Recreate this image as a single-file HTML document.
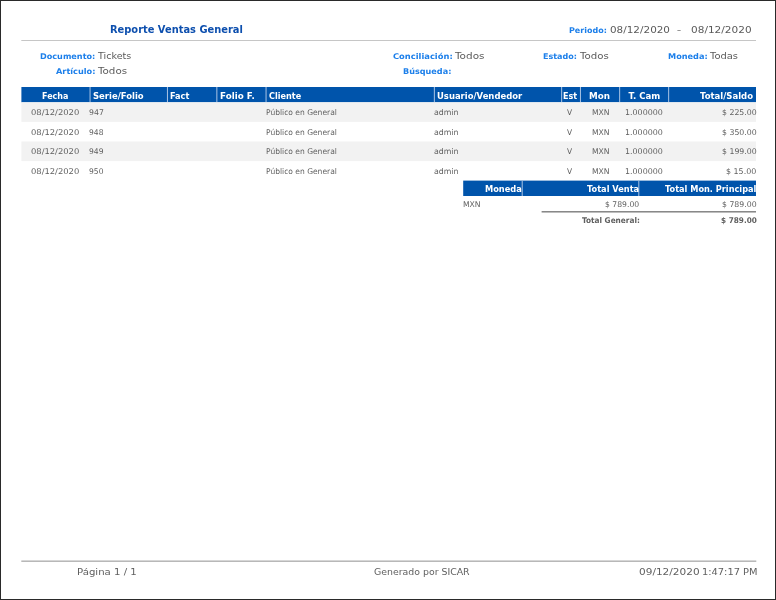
<!DOCTYPE html>
<html lang="es"><head><meta charset="utf-8"><title>Reporte Ventas General</title>
<style>
html,body{margin:0;padding:0;background:#fff;}
#page{position:relative;width:776px;height:600px;overflow:hidden;background:#fff;will-change:transform}
#frame{position:absolute;left:0;top:0;width:774px;height:598px;border:1px solid #2a2a2a;box-sizing:content-box;pointer-events:none}
#bg{position:absolute;left:0;top:0;display:block}
.t{position:absolute;white-space:pre;line-height:16px;display:block;transform-origin:0 0}
.rd{font-family:'DejaVu Sans', 'Liberation Sans', sans-serif;font-weight:normal}
.rl{font-family:'Liberation Sans', sans-serif;font-weight:normal}
.bd{font-family:'DejaVu Sans', 'Liberation Sans', sans-serif;font-weight:bold}
.bl{font-family:'Liberation Sans', sans-serif;font-weight:bold}
</style></head>
<body><div id="page">
<svg id="bg" width="776" height="600" viewBox="0 0 776 600">
<rect x="21.30" y="40.00" width="734.70" height="1.00" fill="#c6c6c6"/>
<rect x="21.30" y="560.60" width="735.00" height="1.10" fill="#9a9a9a"/>
<rect x="21.40" y="87.00" width="734.60" height="15.30" fill="#0054ab"/>
<rect x="89.55" y="87.00" width="1.00" height="15.30" fill="#a9c4e4"/>
<rect x="166.95" y="87.00" width="1.00" height="15.30" fill="#a9c4e4"/>
<rect x="216.35" y="87.00" width="1.00" height="15.30" fill="#a9c4e4"/>
<rect x="265.55" y="87.00" width="1.00" height="15.30" fill="#a9c4e4"/>
<rect x="433.85" y="87.00" width="1.00" height="15.30" fill="#a9c4e4"/>
<rect x="561.15" y="87.00" width="1.00" height="15.30" fill="#a9c4e4"/>
<rect x="579.95" y="87.00" width="1.00" height="15.30" fill="#a9c4e4"/>
<rect x="619.15" y="87.00" width="1.00" height="15.30" fill="#a9c4e4"/>
<rect x="668.15" y="87.00" width="1.00" height="15.30" fill="#a9c4e4"/>
<rect x="21.40" y="102.30" width="734.60" height="19.60" fill="#f2f2f2"/>
<rect x="21.40" y="141.50" width="734.60" height="19.60" fill="#f2f2f2"/>
<rect x="463.20" y="180.60" width="292.80" height="15.40" fill="#0054ab"/>
<rect x="521.70" y="180.60" width="1.00" height="15.40" fill="#a9c4e4"/>
<rect x="638.30" y="180.60" width="1.00" height="15.40" fill="#a9c4e4"/>
<rect x="541.60" y="211.10" width="214.40" height="1.40" fill="#7c7c7c"/>
</svg>
<span class="t bd" style="left:110.20px;top:22.00px;font-size:10.8px;color:#0d4fae;transform:scaleX(0.9143);">Reporte Ventas General</span>
<span class="t bd" style="left:568.82px;top:23.00px;font-size:7.9px;color:#1c7fea;transform:scaleX(1.0143);">Periodo:</span>
<span class="t rd" style="left:610.20px;top:22.00px;font-size:9.5px;color:#5a5a5a;transform:scaleX(1.0957);">08/12/2020</span>
<span class="t rd" style="left:677.26px;top:22.00px;font-size:9.5px;color:#5a5a5a;transform:scaleX(0.8523);">–</span>
<span class="t rd" style="left:690.58px;top:22.00px;font-size:9.5px;color:#5a5a5a;transform:scaleX(1.1067);">08/12/2020</span>
<span class="t bd" style="left:39.63px;top:49.00px;font-size:7.9px;color:#1c7fea;transform:scaleX(1.0284);">Documento:</span>
<span class="t rd" style="left:97.50px;top:48.00px;font-size:9.0px;color:#5a5a5a;transform:scaleX(1.0621);">Tickets</span>
<span class="t bd" style="left:55.57px;top:64.00px;font-size:7.9px;color:#1c7fea;transform:scaleX(1.0381);">Artículo:</span>
<span class="t rd" style="left:97.71px;top:63.00px;font-size:9.0px;color:#5a5a5a;transform:scaleX(1.1468);">Todos</span>
<span class="t bd" style="left:392.82px;top:49.00px;font-size:7.9px;color:#1c7fea;transform:scaleX(1.0564);">Conciliación:</span>
<span class="t rd" style="left:454.55px;top:48.00px;font-size:9.0px;color:#5a5a5a;transform:scaleX(1.1610);">Todos</span>
<span class="t bd" style="left:403.46px;top:64.00px;font-size:7.9px;color:#1c7fea;transform:scaleX(1.0281);">Búsqueda:</span>
<span class="t bd" style="left:542.91px;top:49.00px;font-size:7.9px;color:#1c7fea;transform:scaleX(1.0185);">Estado:</span>
<span class="t rd" style="left:579.88px;top:48.00px;font-size:9.0px;color:#5a5a5a;transform:scaleX(1.1337);">Todos</span>
<span class="t bd" style="left:667.52px;top:49.00px;font-size:7.9px;color:#1c7fea;transform:scaleX(1.0351);">Moneda:</span>
<span class="t rd" style="left:710.38px;top:48.00px;font-size:9.0px;color:#5a5a5a;transform:scaleX(1.1025);">Todas</span>
<span class="t bd" style="left:42.44px;top:88.00px;font-size:8.6px;color:#ffffff;transform:scaleX(0.9283);">Fecha</span>
<span class="t bd" style="left:93.35px;top:88.00px;font-size:8.6px;color:#ffffff;transform:scaleX(0.9860);">Serie/Folio</span>
<span class="t bd" style="left:170.40px;top:88.00px;font-size:8.6px;color:#ffffff;transform:scaleX(0.9459);">Fact</span>
<span class="t bd" style="left:219.83px;top:88.00px;font-size:8.6px;color:#ffffff;transform:scaleX(1.0208);">Folio F.</span>
<span class="t bd" style="left:268.67px;top:88.00px;font-size:8.6px;color:#ffffff;transform:scaleX(0.9442);">Cliente</span>
<span class="t bd" style="left:436.71px;top:88.00px;font-size:8.6px;color:#ffffff;transform:scaleX(0.9831);">Usuario/Vendedor</span>
<span class="t bd" style="left:563.03px;top:88.00px;font-size:8.6px;color:#ffffff;transform:scaleX(0.9378);">Est</span>
<span class="t bd" style="left:589.24px;top:88.00px;font-size:8.6px;color:#ffffff;transform:scaleX(1.0218);">Mon</span>
<span class="t bd" style="left:628.43px;top:88.00px;font-size:8.6px;color:#ffffff;">T. Cam</span>
<span class="t bd" style="left:699.75px;top:88.00px;font-size:8.6px;color:#ffffff;transform:scaleX(0.9887);">Total/Saldo</span>
<span class="t rd" style="left:31.18px;top:105.00px;font-size:7.9px;color:#606060;transform:scaleX(1.0604);">08/12/2020</span>
<span class="t rd" style="left:89.42px;top:105.00px;font-size:7.9px;color:#606060;transform:scaleX(0.9880);">947</span>
<span class="t rd" style="left:265.70px;top:105.00px;font-size:7.9px;color:#606060;transform:scaleX(0.9554);">Público en General</span>
<span class="t rd" style="left:433.57px;top:105.00px;font-size:7.9px;color:#606060;transform:scaleX(0.9911);">admin</span>
<span class="t rd" style="left:567.31px;top:105.00px;font-size:7.9px;color:#606060;transform:scaleX(0.9470);">V</span>
<span class="t rd" style="left:591.59px;top:105.00px;font-size:7.9px;color:#606060;transform:scaleX(0.9719);">MXN</span>
<span class="t rd" style="left:624.79px;top:105.00px;font-size:7.9px;color:#606060;transform:scaleX(1.0050);">1.000000</span>
<span class="t rd" style="left:721.56px;top:105.00px;font-size:7.9px;color:#606060;transform:scaleX(0.9879);">$ 225.00</span>
<span class="t rd" style="left:31.18px;top:125.00px;font-size:7.9px;color:#606060;transform:scaleX(1.0604);">08/12/2020</span>
<span class="t rd" style="left:89.44px;top:125.00px;font-size:7.9px;color:#606060;transform:scaleX(0.9593);">948</span>
<span class="t rd" style="left:265.70px;top:125.00px;font-size:7.9px;color:#606060;transform:scaleX(0.9554);">Público en General</span>
<span class="t rd" style="left:433.57px;top:125.00px;font-size:7.9px;color:#606060;transform:scaleX(0.9911);">admin</span>
<span class="t rd" style="left:567.31px;top:125.00px;font-size:7.9px;color:#606060;transform:scaleX(0.9470);">V</span>
<span class="t rd" style="left:591.59px;top:125.00px;font-size:7.9px;color:#606060;transform:scaleX(0.9719);">MXN</span>
<span class="t rd" style="left:624.79px;top:125.00px;font-size:7.9px;color:#606060;transform:scaleX(1.0050);">1.000000</span>
<span class="t rd" style="left:721.56px;top:125.00px;font-size:7.9px;color:#606060;transform:scaleX(0.9879);">$ 350.00</span>
<span class="t rd" style="left:31.18px;top:144.00px;font-size:7.9px;color:#606060;transform:scaleX(1.0604);">08/12/2020</span>
<span class="t rd" style="left:89.44px;top:144.00px;font-size:7.9px;color:#606060;transform:scaleX(0.9650);">949</span>
<span class="t rd" style="left:265.70px;top:144.00px;font-size:7.9px;color:#606060;transform:scaleX(0.9554);">Público en General</span>
<span class="t rd" style="left:433.57px;top:144.00px;font-size:7.9px;color:#606060;transform:scaleX(0.9911);">admin</span>
<span class="t rd" style="left:567.31px;top:144.00px;font-size:7.9px;color:#606060;transform:scaleX(0.9470);">V</span>
<span class="t rd" style="left:591.59px;top:144.00px;font-size:7.9px;color:#606060;transform:scaleX(0.9719);">MXN</span>
<span class="t rd" style="left:624.79px;top:144.00px;font-size:7.9px;color:#606060;transform:scaleX(1.0050);">1.000000</span>
<span class="t rd" style="left:721.56px;top:144.00px;font-size:7.9px;color:#606060;transform:scaleX(0.9879);">$ 199.00</span>
<span class="t rd" style="left:31.18px;top:164.00px;font-size:7.9px;color:#606060;transform:scaleX(1.0604);">08/12/2020</span>
<span class="t rd" style="left:89.44px;top:164.00px;font-size:7.9px;color:#606060;transform:scaleX(0.9593);">950</span>
<span class="t rd" style="left:265.70px;top:164.00px;font-size:7.9px;color:#606060;transform:scaleX(0.9554);">Público en General</span>
<span class="t rd" style="left:433.57px;top:164.00px;font-size:7.9px;color:#606060;transform:scaleX(0.9911);">admin</span>
<span class="t rd" style="left:567.31px;top:164.00px;font-size:7.9px;color:#606060;transform:scaleX(0.9470);">V</span>
<span class="t rd" style="left:591.59px;top:164.00px;font-size:7.9px;color:#606060;transform:scaleX(0.9719);">MXN</span>
<span class="t rd" style="left:624.79px;top:164.00px;font-size:7.9px;color:#606060;transform:scaleX(1.0050);">1.000000</span>
<span class="t rd" style="left:725.76px;top:164.00px;font-size:7.9px;color:#606060;transform:scaleX(1.0043);">$ 15.00</span>
<span class="t bd" style="left:484.92px;top:181.00px;font-size:8.5px;color:#ffffff;transform:scaleX(0.9703);">Moneda</span>
<span class="t bd" style="left:586.65px;top:181.00px;font-size:8.5px;color:#ffffff;transform:scaleX(0.9669);">Total Venta</span>
<span class="t bd" style="left:664.99px;top:181.00px;font-size:8.5px;color:#ffffff;transform:scaleX(0.9637);">Total Mon. Principal</span>
<span class="t rd" style="left:462.99px;top:197.00px;font-size:7.9px;color:#606060;transform:scaleX(0.9719);">MXN</span>
<span class="t rd" style="left:605.30px;top:197.00px;font-size:7.9px;color:#606060;transform:scaleX(0.9718);">$ 789.00</span>
<span class="t rd" style="left:721.88px;top:197.00px;font-size:7.9px;color:#606060;transform:scaleX(0.9851);">$ 789.00</span>
<span class="t bd" style="left:582.40px;top:213.00px;font-size:7.9px;color:#606060;transform:scaleX(0.9302);">Total General:</span>
<span class="t bd" style="left:721.20px;top:213.00px;font-size:7.9px;color:#606060;transform:scaleX(0.9262);">$ 789.00</span>
<span class="t rd" style="left:77.40px;top:564.00px;font-size:9.3px;color:#606060;transform:scaleX(1.0920);">Página 1 / 1</span>
<span class="t rd" style="left:374.38px;top:564.00px;font-size:9.3px;color:#606060;transform:scaleX(1.0074);">Generado por SICAR</span>
<span class="t rd" style="left:638.98px;top:564.00px;font-size:9.3px;color:#606060;transform:scaleX(1.1312);">09/12/2020</span>
<span class="t rd" style="left:701.57px;top:564.00px;font-size:9.3px;color:#606060;transform:scaleX(1.0596);">1:47:17 PM</span>
<div id="frame"></div>
</div></body></html>
